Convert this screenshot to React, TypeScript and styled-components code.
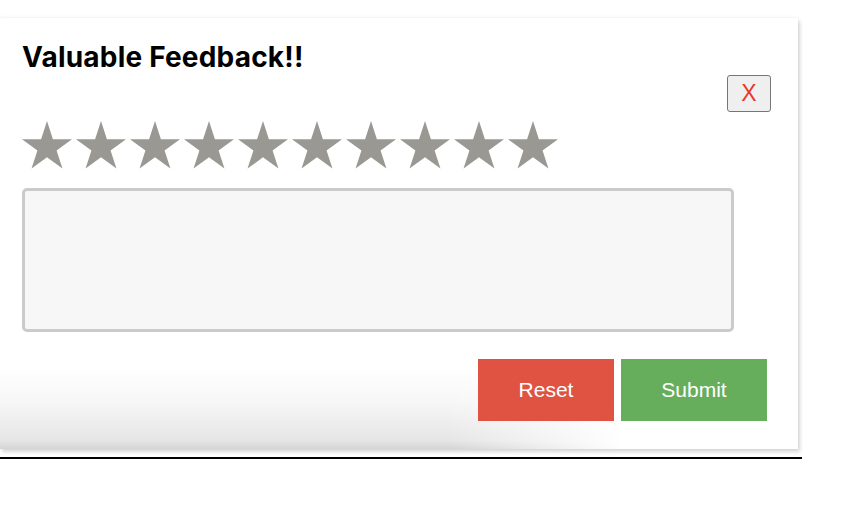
import React from "react";
import styled, { createGlobalStyle } from "styled-components";

const GlobalStyle = createGlobalStyle`
  html, body {
    margin: 0;
    padding: 0;
    background: #ffffff;
  }
  body {
    font-family: "Liberation Sans", Arial, sans-serif;
  }
  * { box-sizing: border-box; }
`;

const Frame = styled.div`
  width: 802px;
  padding: 18px 4px 8px 0;
  border-bottom: 2px solid #000;
`;

const Card = styled.section`
  position: relative;
  background: #ffffff;
  padding: 22px 27px 28px 22px;
  box-shadow: 2px 3px 4px rgba(0, 0, 0, 0.16), 0 -1px 3px rgba(0, 0, 0, 0.05);
  display: flex;
  flex-direction: column;

  &::before {
    content: "";
    position: absolute;
    left: 0;
    right: 0;
    bottom: 0;
    height: 82px;
    background: linear-gradient(
      to bottom,
      rgba(0, 0, 0, 0) 0%,
      rgba(0, 0, 0, 0.035) 45%,
      rgba(0, 0, 0, 0.1) 90%,
      rgba(0, 0, 0, 0.17) 100%
    );
    -webkit-mask-image: linear-gradient(to right, #000 0%, #000 56%, transparent 78%);
    mask-image: linear-gradient(to right, #000 0%, #000 56%, transparent 78%);
    pointer-events: none;
  }
`;

const Title = styled.h2`
  margin: 0;
  font-family: Inter, "Noto Sans", sans-serif;
  font-weight: 700;
  font-size: 28px;
  letter-spacing: 0.2px;
  line-height: 34px;
  color: #000;
`;

const CloseRow = styled.div`
  display: flex;
  justify-content: flex-end;
  position: relative;
  z-index: 1;
`;

const CloseButton = styled.button`
  width: 44px;
  height: 37px;
  margin: 1px 0 0 0;
  padding: 0;
  background: #efefef;
  border: 1px solid #767676;
  border-radius: 3px;
  color: #e8382b;
  font-family: "Liberation Sans", Arial, sans-serif;
  font-size: 23px;
  line-height: 1;
  cursor: pointer;
`;

const Stars = styled.div`
  display: flex;
  gap: 4px;
  margin-top: 9px;
`;

const StarIcon = styled.svg`
  display: block;
  width: 50px;
  height: 48px;
  fill: #999893;
`;

const Comment = styled.textarea`
  display: block;
  width: 712px;
  height: 144px;
  margin-top: 19px;
  background: #f7f7f7;
  border: 3px solid #cbcbcb;
  border-radius: 5px;
  resize: none;
  outline: none;
  font-family: "Liberation Sans", Arial, sans-serif;
  font-size: 16px;
  padding: 8px;
`;

const ActionRow = styled.div`
  display: flex;
  justify-content: flex-end;
  gap: 7px;
  margin-top: 27px;
  margin-right: 4px;
  position: relative;
  z-index: 1;
`;

const ActionButton = styled.button<{ $tone: "danger" | "success" }>`
  height: 62px;
  width: ${(p) => (p.$tone === "danger" ? "136px" : "146px")};
  padding: 0;
  border: none;
  border-radius: 0;
  background: ${(p) => (p.$tone === "danger" ? "#e05343" : "#67ae5c")};
  color: #ffffff;
  font-family: "Liberation Sans", Arial, sans-serif;
  font-size: 21px;
  cursor: pointer;
`;

const STAR_POINTS =
  "25,0 30.91,18.17 50,18.17 34.56,29.41 40.46,47.58 25,36.35 9.54,47.58 15.44,29.41 0,18.17 19.09,18.17";

const Star: React.FC = () => (
  <StarIcon viewBox="0 0 50 48" aria-hidden="true">
    <polygon points={STAR_POINTS} />
  </StarIcon>
);

export default function App() {
  return (
    <>
      <GlobalStyle />
      <Frame>
        <Card>
          <Title>Valuable Feedback!!</Title>
          <CloseRow>
            <CloseButton type="button">X</CloseButton>
          </CloseRow>
          <Stars>
            {Array.from({ length: 10 }).map((_, i) => (
              <Star key={i} />
            ))}
          </Stars>
          <Comment />
          <ActionRow>
            <ActionButton $tone="danger" type="button">Reset</ActionButton>
            <ActionButton $tone="success" type="button">Submit</ActionButton>
          </ActionRow>
        </Card>
      </Frame>
    </>
  );
}
